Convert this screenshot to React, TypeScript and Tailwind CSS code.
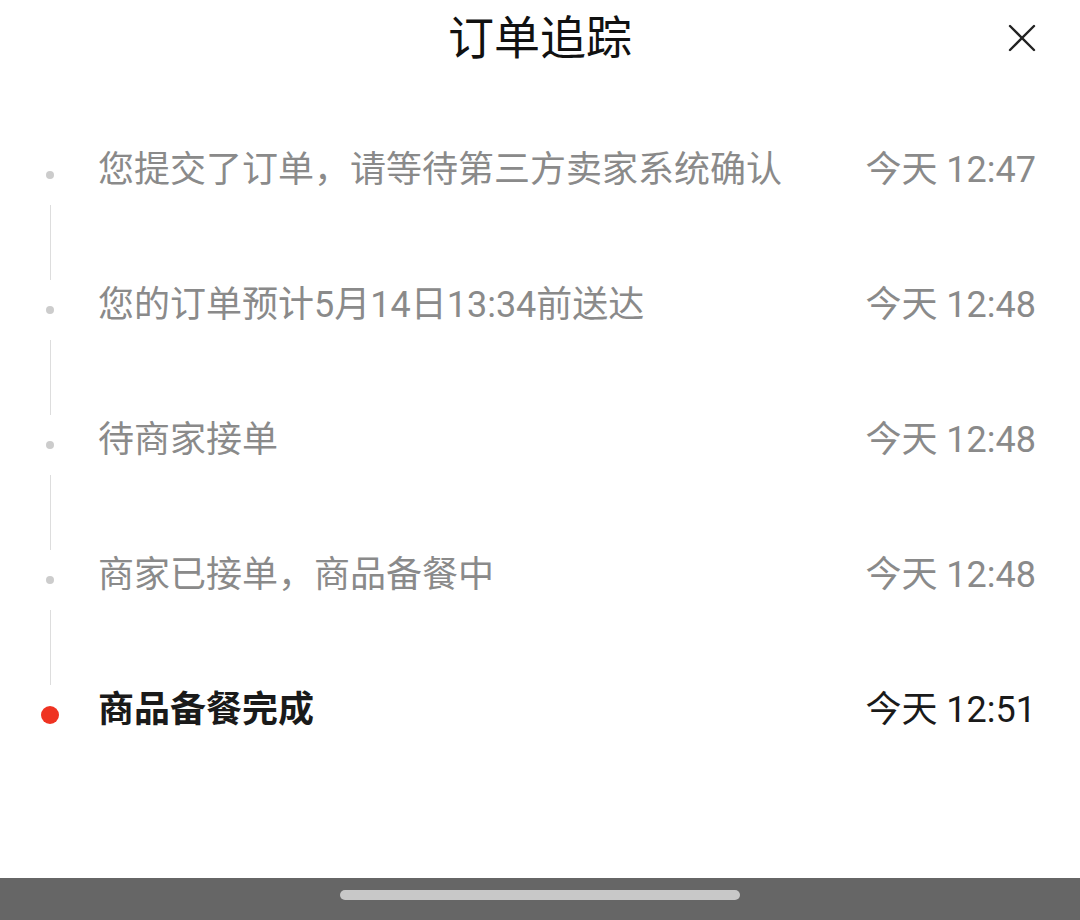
const steps = [
  { text: '您提交了订单，请等待第三方卖家系统确认', time: '今天 12:47' },
  { text: '您的订单预计5月14日13:34前送达', time: '今天 12:48' },
  { text: '待商家接单', time: '今天 12:48' },
  { text: '商家已接单，商品备餐中', time: '今天 12:48' },
  { text: '商品备餐完成', time: '今天 12:51', current: true },
];

function CloseIcon() {
  return (
    <svg width="30" height="30" viewBox="0 0 30 30" fill="none">
      <path d="M3 3L27 27M27 3L3 27" stroke="#222" strokeWidth="2.4" strokeLinecap="round" />
    </svg>
  );
}

export default function App() {
  return (
    <div
      className="flex h-[920px] w-[1080px] flex-col bg-white"
      style={{ fontFamily: 'Roboto, "Noto Sans CJK SC", "Noto Sans", sans-serif' }}
    >
      <div className="flex-1">
        <div className="relative flex h-[76px] items-center justify-center">
          <h1 className="text-[46px] font-normal leading-none text-[#111111]">订单追踪</h1>
          <button className="absolute right-[43px] top-[23px]">
            <CloseIcon />
          </button>
        </div>

        <ul className="pt-[74px] pr-[44px]">
          {steps.map((s, i) => (
            <li key={i} className="flex h-[135px]">
              <div className="flex w-[98px] shrink-0 flex-col items-center pl-[2px]">
                {s.current ? (
                  <span className="mt-[16px] h-[18px] w-[18px] rounded-full bg-[#ef3322]" />
                ) : (
                  <>
                    <span className="mt-[21px] h-[8px] w-[8px] rounded-full bg-[#cccccc]" />
                    <span className="mt-[26px] h-[75px] w-px bg-[#dddddd]" />
                  </>
                )}
              </div>
              <div
                className={
                  'flex flex-1 items-start justify-between text-[36px] leading-[40px] ' +
                  (s.current ? 'font-bold text-[#1a1a1a]' : 'text-[#8a8a8a]')
                }
              >
                <span>{s.text}</span>
                <span className={s.current ? 'font-normal' : ''}>{s.time}</span>
              </div>
            </li>
          ))}
        </ul>
      </div>

      <div className="flex h-[42px] items-start justify-center bg-[#666666]">
        <div className="mt-[12px] h-[10px] w-[400px] rounded-full bg-[#c8c8c8]" />
      </div>
    </div>
  );
}
